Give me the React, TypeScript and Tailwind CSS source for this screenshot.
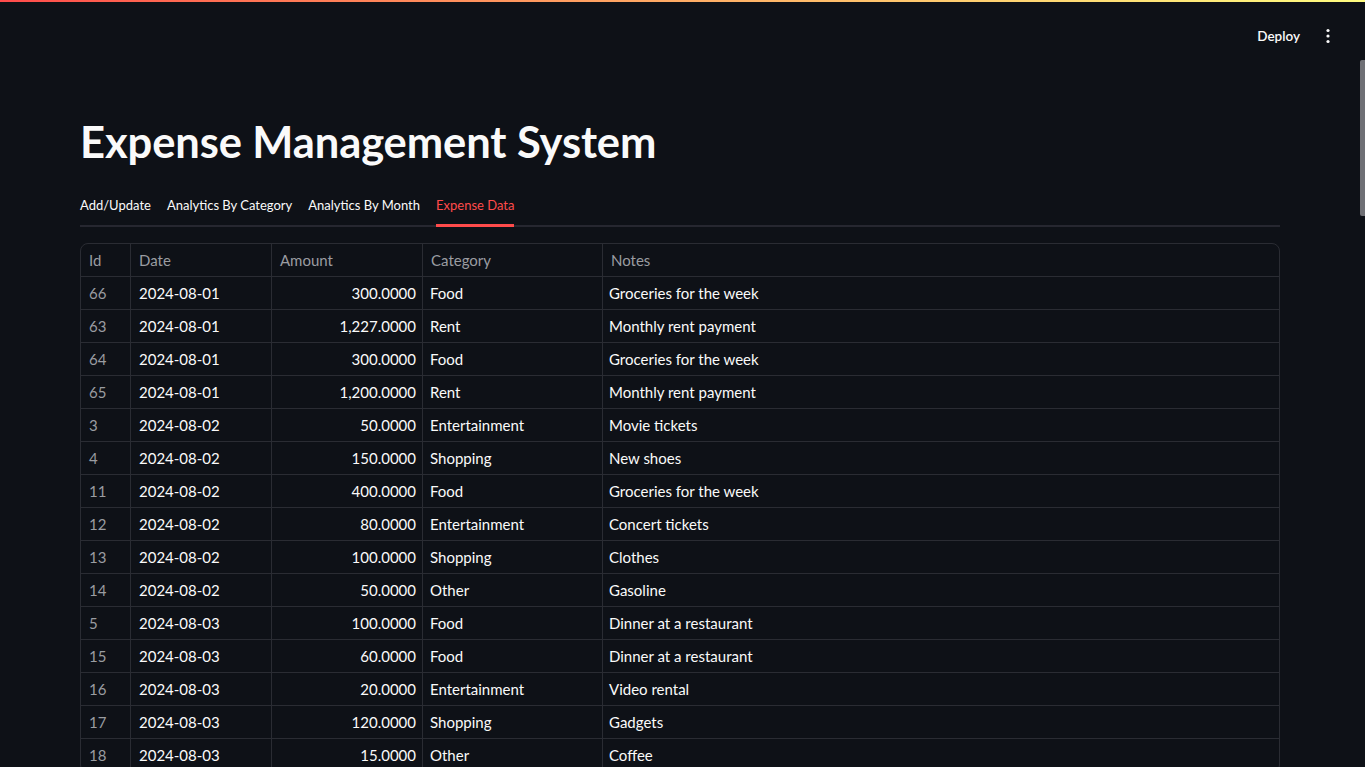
import React from "react";

const rows: [string, string, string, string, string][] = [
  ["66", "2024-08-01", "300.0000", "Food", "Groceries for the week"],
  ["63", "2024-08-01", "1,227.0000", "Rent", "Monthly rent payment"],
  ["64", "2024-08-01", "300.0000", "Food", "Groceries for the week"],
  ["65", "2024-08-01", "1,200.0000", "Rent", "Monthly rent payment"],
  ["3", "2024-08-02", "50.0000", "Entertainment", "Movie tickets"],
  ["4", "2024-08-02", "150.0000", "Shopping", "New shoes"],
  ["11", "2024-08-02", "400.0000", "Food", "Groceries for the week"],
  ["12", "2024-08-02", "80.0000", "Entertainment", "Concert tickets"],
  ["13", "2024-08-02", "100.0000", "Shopping", "Clothes"],
  ["14", "2024-08-02", "50.0000", "Other", "Gasoline"],
  ["5", "2024-08-03", "100.0000", "Food", "Dinner at a restaurant"],
  ["15", "2024-08-03", "60.0000", "Food", "Dinner at a restaurant"],
  ["16", "2024-08-03", "20.0000", "Entertainment", "Video rental"],
  ["17", "2024-08-03", "120.0000", "Shopping", "Gadgets"],
  ["18", "2024-08-03", "15.0000", "Other", "Coffee"],
];

const grid = "grid grid-cols-[50px_141px_151px_180px_1fr]";

export default function App() {
  return (
    <div className="relative h-[767px] w-full overflow-hidden bg-[#0e1117] text-[#fafafa] font-['Lato','Noto_Sans',sans-serif]">
      <div className="h-[2px] w-full bg-gradient-to-r from-[#ff4b4b] to-[#fffd80]" />
      <div className="flex h-[68px] items-center justify-end pr-[28px]">
        <span className="text-[13.5px] font-semibold mr-[20px]">Deploy</span>
        <svg width="16" height="16" viewBox="0 0 16 16" className="mr-[1px]">
          <circle cx="8" cy="2.5" r="1.6" fill="#fafafa" />
          <circle cx="8" cy="8" r="1.6" fill="#fafafa" />
          <circle cx="8" cy="13.5" r="1.6" fill="#fafafa" />
        </svg>
      </div>
      <div className="px-[80px] pr-[85px]">
        <h1 className="mt-[44px] text-[43.5px] leading-[54px] font-bold tracking-[-0.1px]">
          Expense Management System
        </h1>
        <div className="relative mt-[27px] flex gap-[16px] text-[13px] leading-[20px]">
          <div className="absolute bottom-0 left-0 right-0 h-[2px] bg-[#262730]" />
          {["Add/Update", "Analytics By Category", "Analytics By Month", "Expense Data"].map((t, i) => (
            <div key={t} className={"relative pb-[12px] " + (i === 3 ? "text-[#ff4b4b]" : "text-[#fafafa]")}>
              {t}
              {i === 3 && <div className="absolute bottom-0 left-0 right-0 h-[3px] bg-[#ff4b4b]" />}
            </div>
          ))}
        </div>
        <div className="mt-[16px] rounded-[8px] border border-[#2a2c33] overflow-hidden text-[15px]">
          <div className={grid + " h-[33px] items-stretch text-[#9a9ca1]"}>
            {["Id", "Date", "Amount", "Category", "Notes"].map((h, i) => (
              <div key={h} className={"flex items-center px-[8px] border-b border-[#2a2c33] " + (i < 4 ? "border-r" : "")}>
                {h}
              </div>
            ))}
          </div>
          {rows.map((r, ri) => (
            <div key={ri} className={grid + " h-[33px]"}>
              <div className="flex items-center px-[8px] border-r border-b border-[#2a2c33] text-[#9a9ca1]">{r[0]}</div>
              <div className="flex items-center px-[8px] border-r border-b border-[#2a2c33]">{r[1]}</div>
              <div className="flex items-center justify-end pr-[6px] border-r border-b border-[#2a2c33]">{r[2]}</div>
              <div className="flex items-center px-[7px] border-r border-b border-[#2a2c33]">{r[3]}</div>
              <div className="flex items-center px-[6px] border-b border-[#2a2c33]">{r[4]}</div>
            </div>
          ))}
        </div>
      </div>
      <div className="absolute right-0 top-[60px] h-[156px] w-[5px] rounded-l-[2px] bg-[#6f7075]" />
    </div>
  );
}
